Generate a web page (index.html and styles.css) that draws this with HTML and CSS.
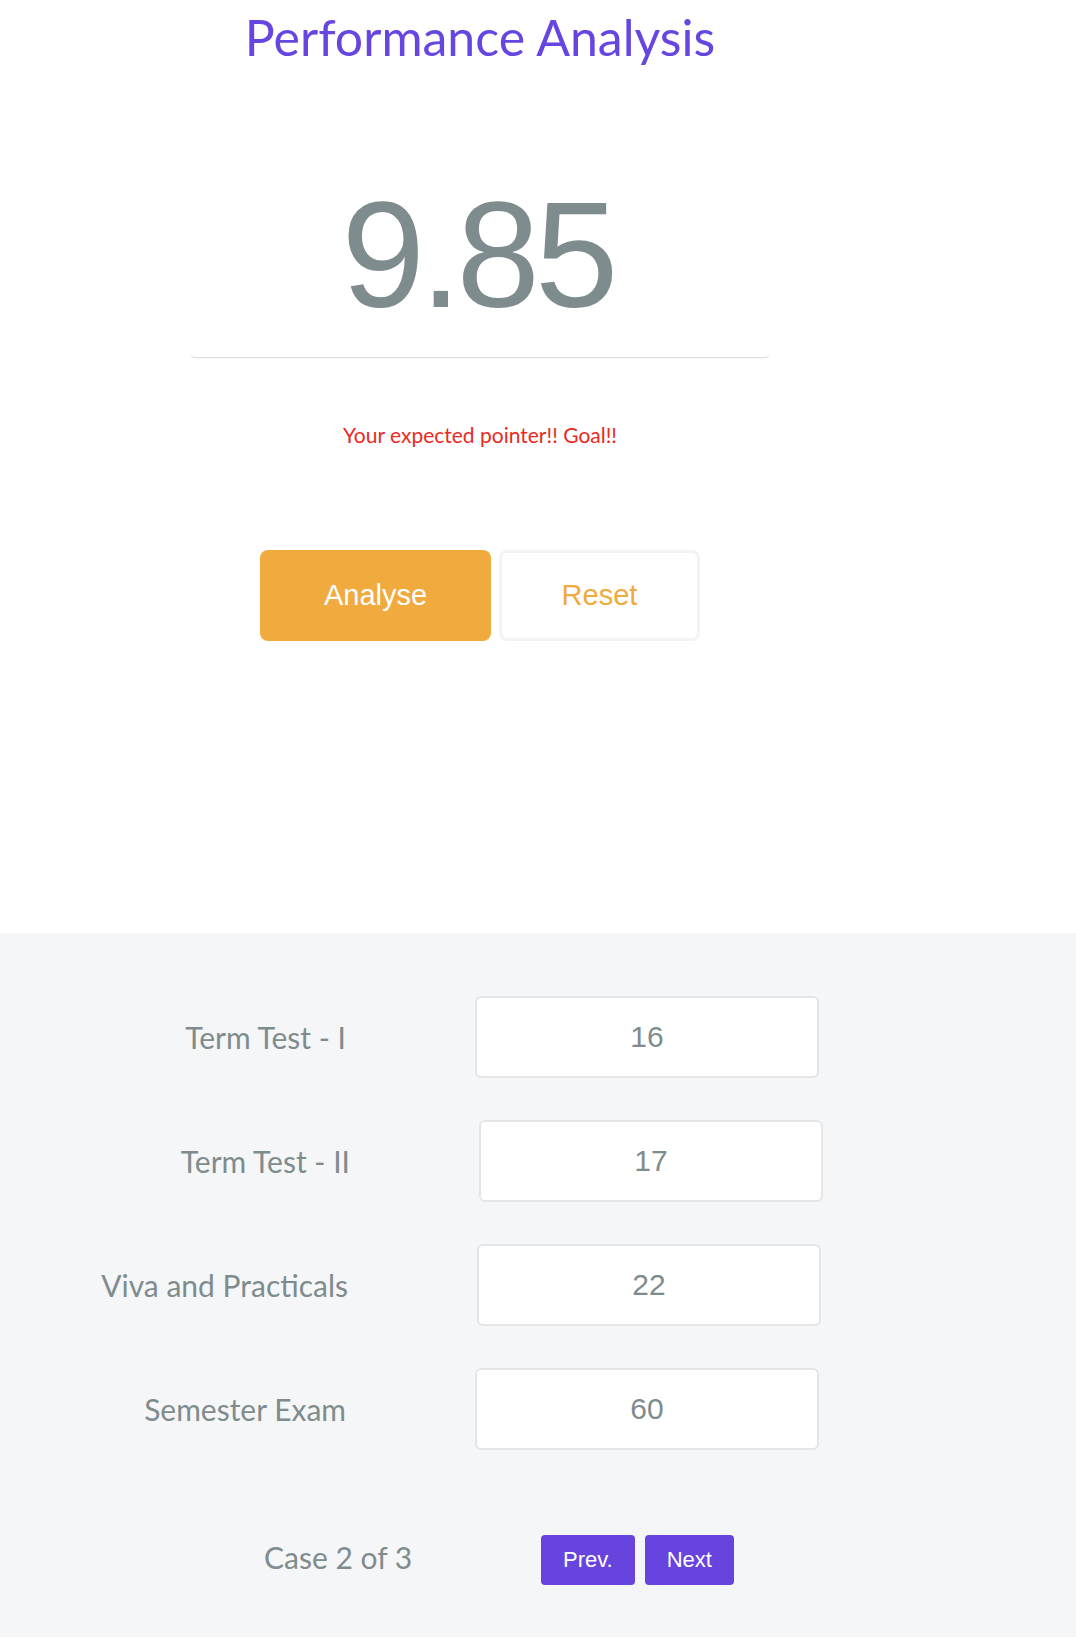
FILE: index.html
```html
<!DOCTYPE html>
<html lang="en">
<head>
<meta charset="utf-8">
<title>Performance Analysis</title>
<link rel="stylesheet" href="styles.css">
</head>
<body>
<main class="page">
  <section class="top">
    <div class="col">
      <h1 class="title">Performance Analysis</h1>
      <div class="score-card"><div class="score">9.85</div></div>
      <p class="msg">Your expected pointer!! Goal!!</p>
      <div class="actions">
        <button class="btn btn-primary" type="button">Analyse</button>
        <button class="btn btn-outline" type="button">Reset</button>
      </div>
    </div>
  </section>
  <section class="marks">
    <div class="row"><label class="label">Term Test - I</label><input class="field" type="text" value="16"></div>
    <div class="row row-shift"><label class="label">Term Test - II</label><input class="field" type="text" value="17"></div>
    <div class="row row-shift-sm"><label class="label">Viva and Practicals</label><input class="field" type="text" value="22"></div>
    <div class="row"><label class="label">Semester Exam</label><input class="field" type="text" value="60"></div>
    <div class="pager">
      <span class="case">Case 2 of 3</span>
      <button class="pbtn" type="button">Prev.</button>
      <button class="pbtn" type="button">Next</button>
    </div>
  </section>
</main>
</body>
</html>
```

FILE: styles.css
```css
* { box-sizing: border-box; }
html, body { margin: 0; padding: 0; background: #ffffff; }
body { font-family: "Lato", "Noto Sans", sans-serif; color: #7f8c8d; }

.top { height: 933px; }
.col { width: 960px; text-align: center; }

.title {
  margin: 0;
  padding-top: 6px;
  font-size: 50px;
  line-height: 62px;
  font-weight: 400;
  color: #6645e0;
}

.score-card {
  width: 582px;
  margin: 112px auto 0;
  padding-bottom: 27px;
  border-radius: 6px;
  box-shadow: 0 2px 1px -1px rgba(0, 0, 0, 0.16);
}
.score {
  font-family: "Liberation Sans", Arial, sans-serif;
  font-size: 150px;
  line-height: 150px;
  letter-spacing: -5px;
  text-indent: -5px;
  color: #7f8c8d;
}

.msg {
  margin: 66px 0 0;
  font-size: 21px;
  line-height: 24px;
  color: #ea2a22;
}

.actions {
  display: flex;
  justify-content: center;
  gap: 8px;
  margin-top: 103px;
}
.btn {
  height: 91px;
  padding: 0;
  border-radius: 8px;
  font-family: "Liberation Sans", Arial, sans-serif;
  font-size: 29px;
  cursor: pointer;
}
.btn-primary { width: 231px; background: #f0aa3e; color: #ffffff; border: 0; }
.btn-outline { width: 201px; background: #ffffff; color: #f0aa3e; border: 3px solid #f1f3f6; }

.marks {
  background: #f5f6f8;
  padding: 63px 0 52px;
}
.row {
  display: flex;
  align-items: center;
  height: 82px;
  margin-bottom: 42px;
}
.label {
  width: 346px;
  text-align: right;
  font-size: 30px;
  color: #7f8c8d;
}
.row-shift .label { width: 350px; }
.row-shift-sm .label { width: 348px; }
.field {
  margin-left: 129px;
  width: 344px;
  height: 82px;
  border: 2px solid #e3e5e7;
  border-radius: 6px;
  background: #ffffff;
  text-align: center;
  font-family: "Liberation Sans", Arial, sans-serif;
  font-size: 30px;
  color: #7f8c8d;
  outline: none;
}

.pager {
  display: flex;
  align-items: center;
  margin-top: 85px;
  padding-left: 264px;
  height: 50px;
}
.case {
  width: 277px;
  margin-bottom: 6px;
  font-size: 30px;
  color: #7f8c8d;
}
.pbtn {
  height: 50px;
  padding: 0 22px;
  margin-right: 10px;
  border: 0;
  border-radius: 4px;
  background: #6744de;
  color: #ffffff;
  font-family: "Liberation Sans", Arial, sans-serif;
  font-size: 22px;
  cursor: pointer;
}
```
